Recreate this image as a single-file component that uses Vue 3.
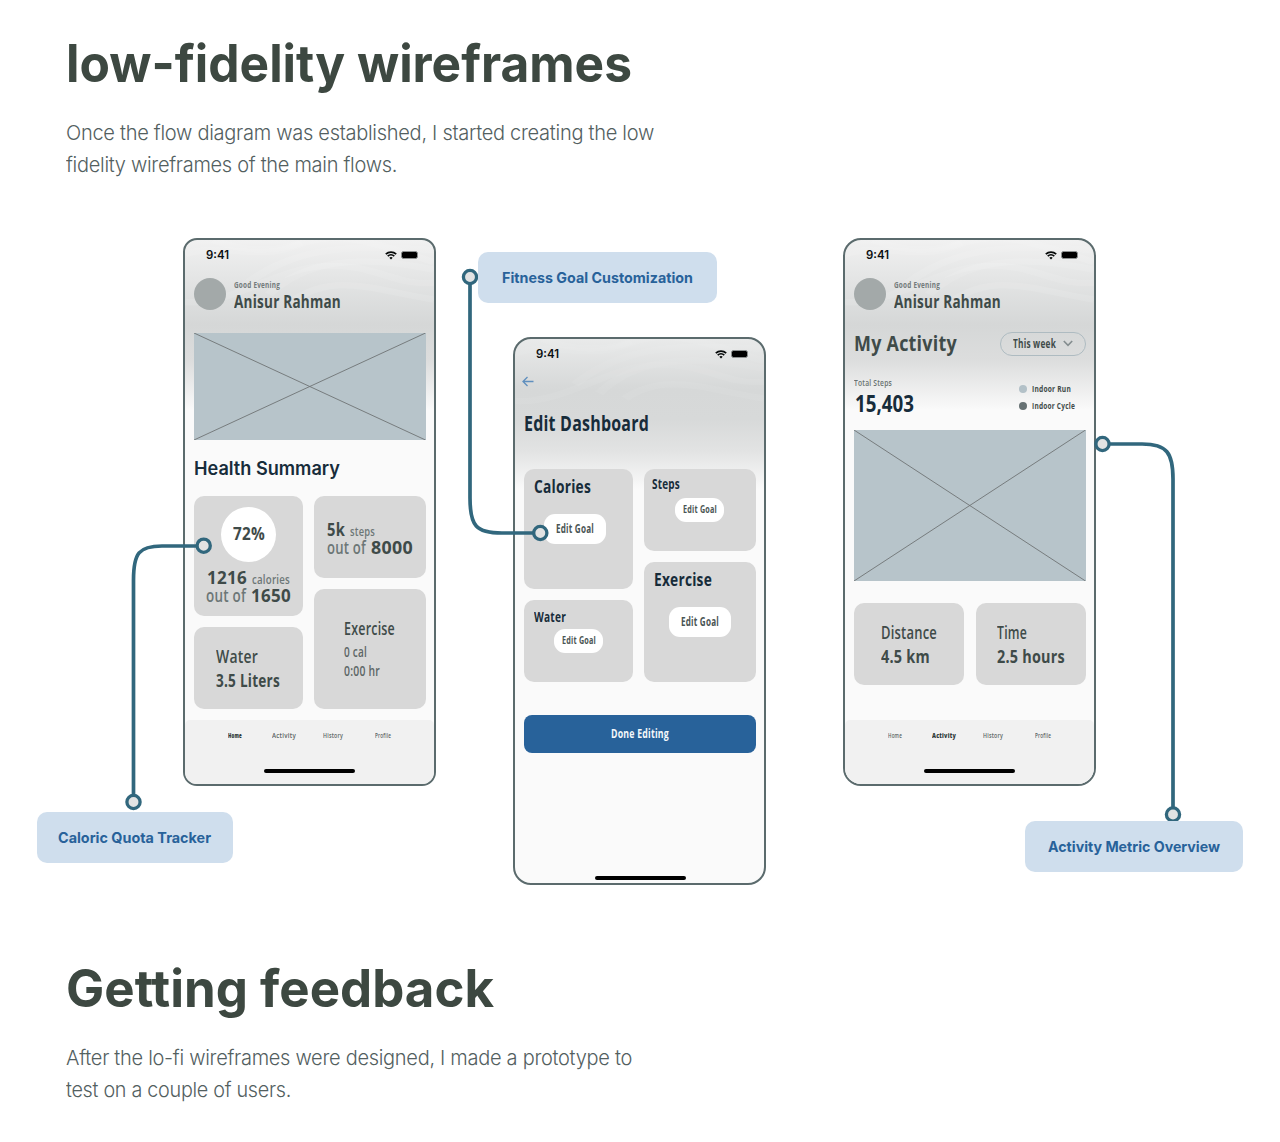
<template>
  <main class="page">
    <section class="intro">
      <h2 class="heading"><span v-fit="566">low-fidelity wireframes</span></h2>
      <p class="copy">
        <span v-fit="588">Once the flow diagram was established, I started creating the low</span>
        <span v-fit="331">fidelity wireframes of the main flows.</span>
      </p>
    </section>

    <section class="phones">
      <article v-for="phone in phones" :key="phone.id" class="phone" :class="phone.id">
        <svg class="waves" viewBox="0 0 249 170" preserveAspectRatio="none">
          <path d="M0 22C40 2 70 34 112 8S190 6 249 34" />
          <path d="M28 0c30 18 62 20 88 4" />
          <path d="M60 70C100 20 150 2 249 16" />
          <path d="M84 84C118 34 170 20 249 46" />
          <path d="M0 96C50 100 90 44 140 40s70 32 109 26" />
          <path d="M110 92C150 50 190 78 249 92" />
        </svg>

        <div class="status">
          <span v-fit="23" class="time">9:41</span>
          <svg class="wifi" viewBox="0 0 12 9">
            <path d="M.8 3.2a7.6 7.6 0 0 1 10.4 0M2.7 5.2a4.9 4.9 0 0 1 6.6 0" />
            <path class="wifi-dot" d="M4.3 6.7a2.5 2.5 0 0 1 3.4 0L6 8.6z" />
          </svg>
          <span class="battery"></span>
        </div>

        <div class="screen">
          <div v-if="phone.id !== 'edit'" class="profile">
            <span class="avatar"></span>
            <div>
              <div class="greeting"><span v-fit="46">Good Evening</span></div>
              <div class="name"><span v-fit="107">Anisur Rahman</span></div>
            </div>
          </div>

          <!-- Home -->
          <template v-if="phone.id === 'home'">
            <svg class="placeholder" viewBox="0 0 232 107" preserveAspectRatio="none">
              <path d="M0 0L232 107M232 0L0 107" />
            </svg>
            <h3 class="summary"><span v-fit="146">Health Summary</span></h3>
            <div class="cards">
              <div class="col">
                <div class="card tall quota">
                  <div class="ring"><span v-fit="32">72%</span></div>
                  <div class="line"><b v-fit="40">1216</b><small v-fit="38">calories</small></div>
                  <div class="line"><span v-fit="40">out of</span><b v-fit="40">1650</b></div>
                </div>
                <div class="card pair intake">
                  <div><span v-fit="42">Water</span></div>
                  <div><b v-fit="64">3.5 Liters</b></div>
                </div>
              </div>
              <div class="col">
                <div class="card walked">
                  <div class="line"><b v-fit="18">5k</b><small v-fit="25">steps</small></div>
                  <div class="line"><span v-fit="39">out of</span><b v-fit="42">8000</b></div>
                </div>
                <div class="card tall workout">
                  <div class="label"><span v-fit="51">Exercise</span></div>
                  <div class="value"><span v-fit="23">0 cal</span></div>
                  <div class="value"><span v-fit="36">0:00 hr</span></div>
                </div>
              </div>
            </div>
          </template>

          <!-- Edit dashboard -->
          <template v-if="phone.id === 'edit'">
            <div class="back">
              <svg viewBox="0 0 12 11"><path d="M11.5 5.5H1M5.5 1L1 5.5L5.5 10" /></svg>
            </div>
            <h3 class="title"><span v-fit="125">Edit Dashboard</span></h3>
            <div class="cards">
              <div v-for="(col, i) in goals" :key="i" class="col">
                <div v-for="goal in col" :key="goal.name" class="card goal" :class="[goal.size, goal.name.toLowerCase()]">
                  <div class="goal-name"><span v-fit="goal.width">{{ goal.name }}</span></div>
                  <div class="goal-btn"><span v-fit="goal.size === 'tall' ? 38 : 34">Edit Goal</span></div>
                </div>
              </div>
            </div>
            <div class="done"><span v-fit="58">Done Editing</span></div>
          </template>

          <!-- Activity -->
          <template v-if="phone.id === 'activity'">
            <div class="activity-head">
              <h3><span v-fit="103">My Activity</span></h3>
              <div class="period">
                <span v-fit="43">This week</span>
                <svg viewBox="0 0 10 7"><path d="M.8 1L5 5.4L9.2 1" /></svg>
              </div>
            </div>
            <div class="totals">
              <div>
                <div class="totals-label"><span v-fit="38">Total Steps</span></div>
                <div class="totals-value"><span v-fit="59">15,403</span></div>
              </div>
              <div class="legend">
                <div><i></i><span v-fit="39">Indoor Run</span></div>
                <div><i class="dark"></i><span v-fit="43">Indoor Cycle</span></div>
              </div>
            </div>
            <svg class="placeholder chart" viewBox="0 0 232 151" preserveAspectRatio="none">
              <path d="M0 0L232 151M232 0L0 151" />
            </svg>
            <div class="metrics">
              <div class="card pair distance">
                <div><span v-fit="56">Distance</span></div>
                <div><b v-fit="49">4.5 km</b></div>
              </div>
              <div class="card pair duration">
                <div><span v-fit="30">Time</span></div>
                <div><b v-fit="68">2.5 hours</b></div>
              </div>
            </div>
          </template>
        </div>

        <nav v-if="phone.id !== 'edit'" class="tabs">
          <div v-for="tab in tabs" :key="tab.name" :class="{ active: tab.name === phone.tab }">
            <span v-fit="tab.width">{{ tab.name }}</span>
          </div>
        </nav>
        <span class="indicator"></span>
      </article>
    </section>

    <section class="outro">
      <h2 class="heading"><span v-fit="428">Getting feedback</span></h2>
      <p class="copy">
        <span v-fit="566">After the lo-fi wireframes were designed, I made a prototype to</span>
        <span v-fit="225">test on a couple of users.</span>
      </p>
    </section>

    <!-- Callouts laid over the phones -->
    <svg class="connectors" viewBox="0 0 1280 1142">
      <path d="M133.5 802V580C133.5 553 139 546 162 546H204" />
      <path d="M470 277V498C470 526 476 533 502 533H540" />
      <path d="M1102.5 444H1142C1167 444 1173 453 1173 479V814" />
      <circle v-for="dot in dots" :key="dot.join()" :cx="dot[0]" :cy="dot[1]" r="6.6" />
    </svg>
    <div class="tag tag-caloric"><span v-fit="153">Caloric Quota Tracker</span></div>
    <div class="tag tag-fitness"><span v-fit="191">Fitness Goal Customization</span></div>
    <div class="tag tag-activity"><span v-fit="172">Activity Metric Overview</span></div>
  </main>
</template>

<script setup>
// Squeezes or stretches a line of text to the given width
const vFit = {
  mounted(el, { value }) {
    const natural = el.getBoundingClientRect().width
    el.style.transform = `scaleX(${value / natural})`
    el.style.marginRight = `${value - natural}px`
  }
}

const phones = [
  { id: 'home', tab: 'Home' },
  { id: 'edit' },
  { id: 'activity', tab: 'Activity' }
]

const tabs = [
  { name: 'Home', width: 14 },
  { name: 'Activity', width: 24 },
  { name: 'History', width: 20 },
  { name: 'Profile', width: 16 }
]

const goals = [
  [
    { name: 'Calories', size: 'tall', width: 57 },
    { name: 'Water', size: 'short', width: 32 }
  ],
  [
    { name: 'Steps', size: 'short', width: 28 },
    { name: 'Exercise', size: 'tall', width: 58 }
  ]
]

const dots = [
  [133.5, 802],
  [203.7, 545.7],
  [470, 277],
  [540.3, 533],
  [1102.5, 444],
  [1173, 814.5]
]
</script>

<style>
body {
  background: #fff;
}
</style>

<style scoped>
.page {
  position: relative;
  width: 1280px;
  height: 1142px;
  overflow: hidden;
  font-family: Inter, "Liberation Sans", sans-serif;
  color: #3f4b49;
}

.page * {
  box-sizing: border-box;
}

h2,
h3,
p {
  margin: 0;
}

.page span,
b,
small {
  display: inline-block;
  flex: none;
  white-space: nowrap;
  transform-origin: 0 50%;
}

.intro {
  padding: 34px 66px 0;
  height: 238px;
}

.outro {
  padding: 1px 66px 0;
}

.heading {
  height: 60px;
  font-size: 52px;
  line-height: 60px;
  font-weight: 700;
  color: #3d4841;
}

.copy {
  display: flex;
  flex-direction: column;
  align-items: flex-start;
  margin-top: 23px;
  font-size: 20.5px;
  line-height: 32px;
  font-weight: 300;
  letter-spacing: -0.3px;
  color: #53605f;
}

/* phones */
.phones {
  display: flex;
  align-items: flex-start;
  gap: 77px;
  height: 720px;
  padding-left: 183px;
}

.phone {
  position: relative;
  display: flex;
  flex-direction: column;
  flex: none;
  width: 253px;
  height: 548px;
  border: 2px solid #5b6b6d;
  border-radius: 18px;
  overflow: hidden;
  background: linear-gradient(#f1f1f1 0, #e5e6e6 35px, #d5d7d7 85px, #dcdddd 120px, #fafafa 170px);
  font-family: "Open Sans", "Noto Sans", sans-serif;
  letter-spacing: 0.3px;
}

.phone.home {
  border-radius: 14px;
}

.phone.edit {
  margin-top: 99px;
  background: linear-gradient(#e9eaea 0, #d6d8d8 50px, #d7d9d9 80px, #e2e3e3 112px, #fafafa 150px);
}

.waves {
  position: absolute;
  top: 0;
  left: 0;
  width: 249px;
  height: 110px;
  fill: none;
  stroke: #fff;
  stroke-opacity: 0.1;
  stroke-width: 10;
}

.edit .waves {
  stroke-opacity: 0.06;
}

.status {
  position: relative;
  display: flex;
  align-items: center;
  height: 30px;
  padding: 0 16px 0 21px;
  font-family: Inter, sans-serif;
  font-size: 11.5px;
  font-weight: 600;
  letter-spacing: 0;
  color: #0a0f10;
}

.wifi {
  width: 12px;
  height: 9px;
  margin-left: auto;
  fill: none;
  stroke: #050808;
  stroke-width: 1.7;
}

.wifi-dot {
  fill: #050808;
  stroke: none;
}

.battery {
  width: 17px;
  height: 8px;
  margin-left: 4px;
  border: 1px solid #8e9292;
  border-radius: 2.5px;
  background: #000;
}

.screen {
  position: relative;
  padding: 0 8.5px 0 9px;
}

.profile {
  display: flex;
  gap: 8px;
  height: 32px;
  margin-top: 8px;
}

.avatar {
  width: 32px;
  height: 32px;
  border-radius: 50%;
  background: #a3a9a9;
}

.greeting {
  height: 15px;
  font-size: 8.5px;
  line-height: 14px;
  font-weight: 700;
  color: #737b7b;
}

.name {
  height: 17px;
  font-size: 18px;
  line-height: 17px;
  font-weight: 700;
}

.placeholder {
  display: block;
  width: 100%;
  height: 107px;
  margin-top: 23px;
  background: #b7c4ca;
  stroke: #6f7475;
  stroke-width: 0.9;
}

.placeholder.chart {
  height: 151px;
  margin-top: 14px;
}

.summary {
  height: 24px;
  margin: 16px 0;
  font-family: Inter, sans-serif;
  font-size: 18.5px;
  line-height: 24px;
  font-weight: 600;
  letter-spacing: 0;
  color: #172c3a;
}

/* cards */
.cards {
  display: grid;
  grid-template-columns: 109px 1fr;
  gap: 11px;
}

.col {
  display: flex;
  flex-direction: column;
  gap: 11px;
}

.card {
  height: 82px;
  border-radius: 10px;
  background: #d8d8d8;
  font-size: 18px;
}

.card.tall {
  height: 120px;
}

.card b {
  font-weight: 700;
}

.card small {
  font-size: 13px;
}

.line {
  display: flex;
  align-items: baseline;
  gap: 5px;
  height: 18px;
  font-size: 17.5px;
  line-height: 18px;
  font-weight: 600;
  color: #6c7676;
}

.line b {
  color: #3f4b49;
}

.quota {
  display: flex;
  flex-direction: column;
  align-items: center;
  padding-top: 11px;
}

.ring {
  display: flex;
  align-items: center;
  justify-content: center;
  width: 55px;
  height: 55px;
  margin-bottom: 6px;
  padding-bottom: 3px;
  border-radius: 50%;
  background: #fff;
  font-weight: 700;
  line-height: 20px;
}

.walked {
  padding: 24px 0 0 13px;
}

.pair {
  padding-top: 17px;
  line-height: 24px;
  font-weight: 600;
}

.pair > div {
  height: 24px;
}

.intake {
  padding-left: 22px;
}

.workout {
  padding: 27px 0 0 30px;
}

.workout .label {
  height: 26px;
  line-height: 24px;
  font-size: 17.5px;
  font-weight: 600;
}

.workout .value {
  height: 19px;
  line-height: 19px;
  font-size: 14px;
  font-weight: 600;
  color: #5c6666;
}

/* edit dashboard */
.back {
  display: flex;
  align-items: center;
  height: 24px;
  margin-left: -2px;
}

.back svg {
  width: 12px;
  height: 11px;
  fill: none;
  stroke: #5f8fbe;
  stroke-width: 1.3;
}

.title {
  height: 30px;
  margin: 15px 0 31px;
  font-size: 21px;
  line-height: 30px;
  color: #172c3a;
}

.card.goal {
  padding: 5px 0 0 10px;
}

.goal-name {
  height: 24px;
  line-height: 24px;
  font-weight: 700;
  color: #172c3a;
}

.goal-btn {
  display: flex;
  align-items: center;
  justify-content: center;
  width: 62px;
  height: 30px;
  margin: 16px 0 0 10px;
  padding-bottom: 2px;
  border-radius: 11px;
  background: #fff;
  font-size: 11.5px;
  font-weight: 700;
  color: #4a5554;
}

.goal.exercise .goal-btn {
  margin-left: 15px;
}

.goal.short .goal-name {
  height: 16px;
  font-size: 13.5px;
  line-height: 16px;
}

.goal.short .goal-btn {
  width: 49px;
  height: 24px;
  font-size: 10.5px;
}

.goal.steps {
  padding: 7px 0 0 8px;
}

.goal.steps .goal-btn {
  margin: 6px 0 0 23px;
}

.goal.water {
  padding-top: 9px;
}

.goal.water .goal-btn {
  margin: 4px 0 0 20px;
}

.done {
  display: flex;
  align-items: center;
  justify-content: center;
  height: 37.5px;
  margin-top: 33px;
  border-radius: 8px;
  background: #28629a;
  font-size: 12px;
  font-weight: 700;
  color: #f4f8fb;
}

/* activity */
.activity-head {
  display: flex;
  align-items: center;
  justify-content: space-between;
  height: 23px;
  margin-top: 22px;
}

.activity-head h3 {
  font-size: 21.5px;
  line-height: 21px;
  padding-bottom: 2px;
}

.period {
  display: flex;
  align-items: center;
  gap: 7px;
  width: 85.5px;
  height: 24px;
  padding-left: 12px;
  border: 1px solid #aebbc1;
  border-radius: 12px;
  font-size: 12px;
  font-weight: 700;
}

.period svg {
  width: 10px;
  height: 7px;
  fill: none;
  stroke: #848d8f;
  stroke-width: 1.6;
}

.totals {
  display: flex;
  justify-content: space-between;
  height: 40px;
  margin-top: 21px;
}

.totals-label {
  height: 14px;
  font-size: 9.5px;
  line-height: 14px;
  font-weight: 600;
  color: #68716f;
}

.totals-value {
  height: 26px;
  padding-left: 1px;
  font-size: 23px;
  line-height: 26px;
  font-weight: 700;
  letter-spacing: 0;
  color: #172c3a;
}

.legend {
  width: 67px;
  padding-top: 4px;
  font-size: 9px;
  font-weight: 700;
}

.legend div {
  display: flex;
  align-items: center;
  gap: 5px;
  height: 17px;
}

.legend i {
  width: 8px;
  height: 8px;
  border-radius: 50%;
  background: #b3c1c8;
}

.legend i.dark {
  background: #667173;
}

.metrics {
  display: grid;
  grid-template-columns: 1fr 1fr;
  gap: 12.5px;
  margin-top: 22px;
}

.distance {
  padding-left: 27px;
}

.duration {
  padding-left: 21px;
}

.tabs {
  position: relative;
  display: grid;
  grid-template-columns: repeat(4, 49.3px);
  height: 64px;
  margin-top: auto;
  padding: 9px 0 0 25px;
  border-radius: 5px 5px 0 0;
  background: #f1f1f1;
  font-size: 7px;
  line-height: 13px;
  font-weight: 600;
  text-align: center;
  color: #596362;
}

.tabs .active {
  font-weight: 800;
  color: #2d3837;
}

.indicator {
  position: absolute;
  bottom: 11.5px;
  left: 79px;
  width: 91px;
  height: 3.5px;
  border-radius: 2px;
  background: #000;
}

.edit .indicator {
  bottom: 3.5px;
  left: 80px;
}

/* callouts */
.connectors {
  position: absolute;
  top: 0;
  left: 0;
  width: 1280px;
  height: 1142px;
  fill: none;
  stroke: #31677d;
  stroke-width: 3.7;
}

.connectors circle {
  fill: #e2e3e3;
  stroke-width: 3.3;
}

.tag {
  position: absolute;
  display: flex;
  align-items: center;
  justify-content: center;
  height: 51px;
  border-radius: 10px;
  background: #cfdeed;
  font-size: 14.5px;
  font-weight: 700;
  color: #28629a;
}

.tag-caloric {
  top: 812px;
  left: 36.5px;
  width: 196.5px;
}

.tag-fitness {
  top: 251.5px;
  left: 478px;
  width: 239px;
}

.tag-activity {
  top: 821px;
  left: 1025px;
  width: 218px;
}
</style>
